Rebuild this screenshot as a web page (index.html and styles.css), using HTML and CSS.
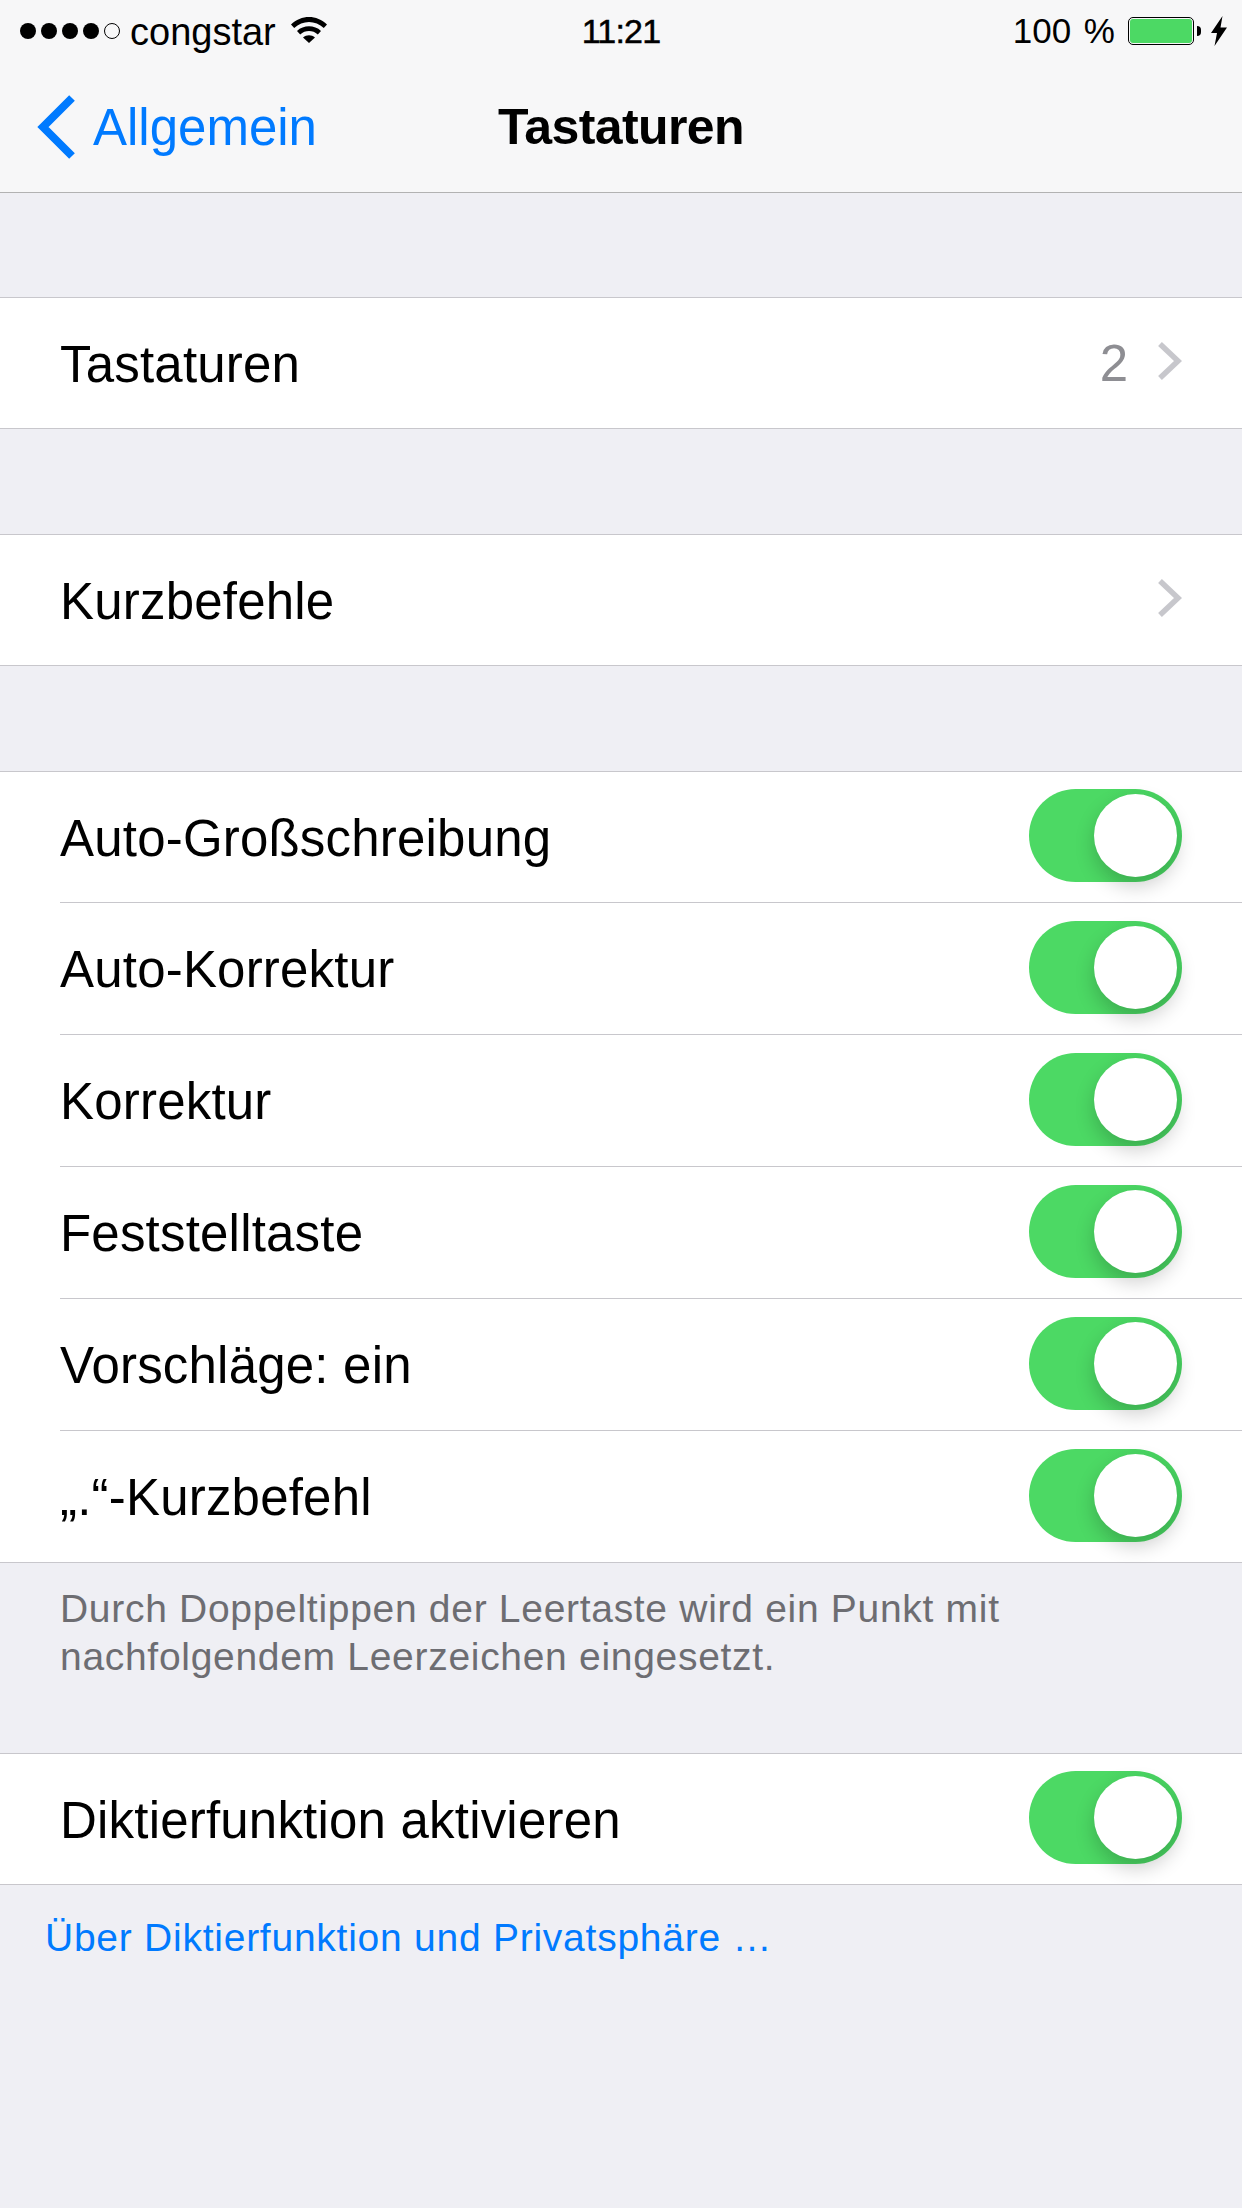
FILE: index.html
```html
<!DOCTYPE html>
<html lang="de">
<head>
  <meta charset="UTF-8" />
  <title>Tastaturen</title>
  <link rel="stylesheet" href="styles.css">
</head>
<body>
  <header class="top">
    <div class="status">
      <div class="status-left">
        <span class="signal"><i></i><i></i><i></i><i></i><i class="off"></i></span>
        <span class="carrier">congstar</span>
        <svg class="wifi" width="38" height="28" viewBox="0 0 38 28">
          <path d="M1 9.500C11 -0.500 27 -0.500 37 9.500L33.800 13C25.500 5 12.500 5 4.200 13Z" fill="#000"/>
          <path d="M7 16C13.500 9.800 24.500 9.800 31 16L27.800 19.400C22.800 14.800 15.200 14.800 10.200 19.400Z" fill="#000"/>
          <path d="M13 22.500C16.500 19.500 21.500 19.500 25 22.500L19 28Z" fill="#000"/>
        </svg>
      </div>
      <div class="clock">11:21</div>
      <div class="status-right">
        <span class="percent">100 %</span>
        <span class="battery"><span class="battery-fill"></span></span>
        <span class="battery-cap"></span>
        <svg class="bolt" width="16" height="30" viewBox="0 0 16 30">
          <path d="M11.500 0L0 17H6L3.500 30L16 11.500H9.500Z" fill="#000"/>
        </svg>
      </div>
    </div>
    <nav class="navbar">
      <a class="back">
        <svg width="40" height="64" viewBox="0 0 40 64">
          <path d="M35 3L6 32L35 61" fill="none" stroke="#007aff" stroke-width="8"/>
        </svg>
        <span>Allgemein</span>
      </a>
      <h1>Tastaturen</h1>
    </nav>
  </header>

  <main>
    <section class="group">
      <div class="row">
        <span class="label">Tastaturen</span>
        <span class="value">2</span>
        <svg class="chevron" width="26" height="40" viewBox="0 0 26 40">
          <path d="M3 3L21 20L3 37" fill="none" stroke="#c7c7cc" stroke-width="5.500"/>
        </svg>
      </div>
    </section>

    <section class="group">
      <div class="row">
        <span class="label">Kurzbefehle</span>
        <svg class="chevron" width="26" height="40" viewBox="0 0 26 40">
          <path d="M3 3L21 20L3 37" fill="none" stroke="#c7c7cc" stroke-width="5.500"/>
        </svg>
      </div>
    </section>

    <section class="group">
      <div class="row"><span class="label">Auto-Großschreibung</span><span class="switch"></span></div>
      <div class="row"><span class="label">Auto-Korrektur</span><span class="switch"></span></div>
      <div class="row"><span class="label">Korrektur</span><span class="switch"></span></div>
      <div class="row"><span class="label">Feststelltaste</span><span class="switch"></span></div>
      <div class="row"><span class="label">Vorschläge: ein</span><span class="switch"></span></div>
      <div class="row"><span class="label">„.“-Kurzbefehl</span><span class="switch"></span></div>
    </section>
    <p class="note">Durch Doppeltippen der Leertaste wird ein Punkt mit nachfolgendem Leerzeichen eingesetzt.</p>

    <section class="group group-dictation">
      <div class="row"><span class="label">Diktierfunktion aktivieren</span><span class="switch"></span></div>
    </section>
    <a class="privacy">Über Diktierfunktion und Privatsphäre …</a>
  </main>
</body>
</html>
```

FILE: styles.css
```css
html, body { margin: 0; padding: 0; }
body { width: 1242px; height: 2208px; overflow: hidden; background: #efeff4; font-family: "Liberation Sans", Arial, sans-serif; color: #000; }

.top { height: 192px; background: #f7f7f8; border-bottom: 1px solid #b2b2b2; box-sizing: content-box; }
.status { height: 62px; display: flex; align-items: center; justify-content: space-between; position: relative; padding: 0 15px 0 20px; }
.status-left, .status-right { display: flex; align-items: center; }
.signal { display: flex; gap: 5px; }
.signal i { width: 16px; height: 16px; border-radius: 50%; background: #000; border: 0 solid #000; }
.signal i.off { box-sizing: border-box; background: none; border-width: 1px; }
.carrier { font-size: 38px; margin: 2px 0 0 10px; }
.wifi { margin: -4px 0 0 14px; }
.clock { position: absolute; left: 0; right: 0; text-align: center; font-size: 34px; letter-spacing: -0.8px; -webkit-text-stroke: 0.5px #000; }
.percent { font-size: 35px; word-spacing: 3px; margin-right: 13px; }
.battery { width: 66px; height: 28px; border: 1px solid #000; border-radius: 5px; padding: 1px; box-sizing: border-box; display: block; }
.battery-fill { display: block; height: 100%; background: #4cd964; border-radius: 3px; }
.battery-cap { width: 4px; height: 10px; background: #000; border-radius: 0 5px 5px 0; margin-left: 3px; }
.bolt { margin-left: 10px; }

.navbar { height: 130px; display: flex; align-items: center; position: relative; }
.back { display: flex; align-items: center; color: #007aff; font-size: 51px; padding-left: 37px; }
.back span { margin-left: 16px; }
.navbar h1 { position: absolute; left: 0; right: 0; margin: 0; text-align: center; font-size: 50px; font-weight: bold; letter-spacing: -0.6px; }

main { display: block; }
.group { background: #fff; border-top: 1px solid #c8c7cc; border-bottom: 1px solid #c8c7cc; margin-top: 104px; }
.group + .group { margin-top: 105px; }
.row { height: 131px; display: flex; align-items: center; margin-left: 60px; padding-right: 60px; border-top: 1px solid #c8c7cc; }
.row:first-child { border-top: 0; height: 130px; }
.label { flex: 1; font-size: 51px; letter-spacing: 0.2px; padding-top: 2px; }
.value { font-size: 51px; color: #8e8e93; margin-right: 29px; }
.chevron { display: block; margin-right: -1px; margin-top: -4px; }

.switch { width: 153px; height: 93px; border-radius: 47px; background: linear-gradient(90deg, #4cd964 50%, #47d160); position: relative; margin-top: -3px; }
.switch::after { content: ""; position: absolute; right: 5px; top: 5px; width: 83px; height: 83px; border-radius: 50%; background: #fff; box-shadow: 0 9px 20px rgba(0, 0, 0, 0.2); }

.note { margin: 0; padding: 22px 60px 0; height: 164px; box-sizing: border-box; font-size: 39px; letter-spacing: 0.7px; line-height: 48px; color: #6d6d72; }
.group.group-dictation { margin-top: 26px; }
.privacy { display: block; padding: 31px 45px 0; font-size: 39px; letter-spacing: 0.75px; color: #007aff; }
```
